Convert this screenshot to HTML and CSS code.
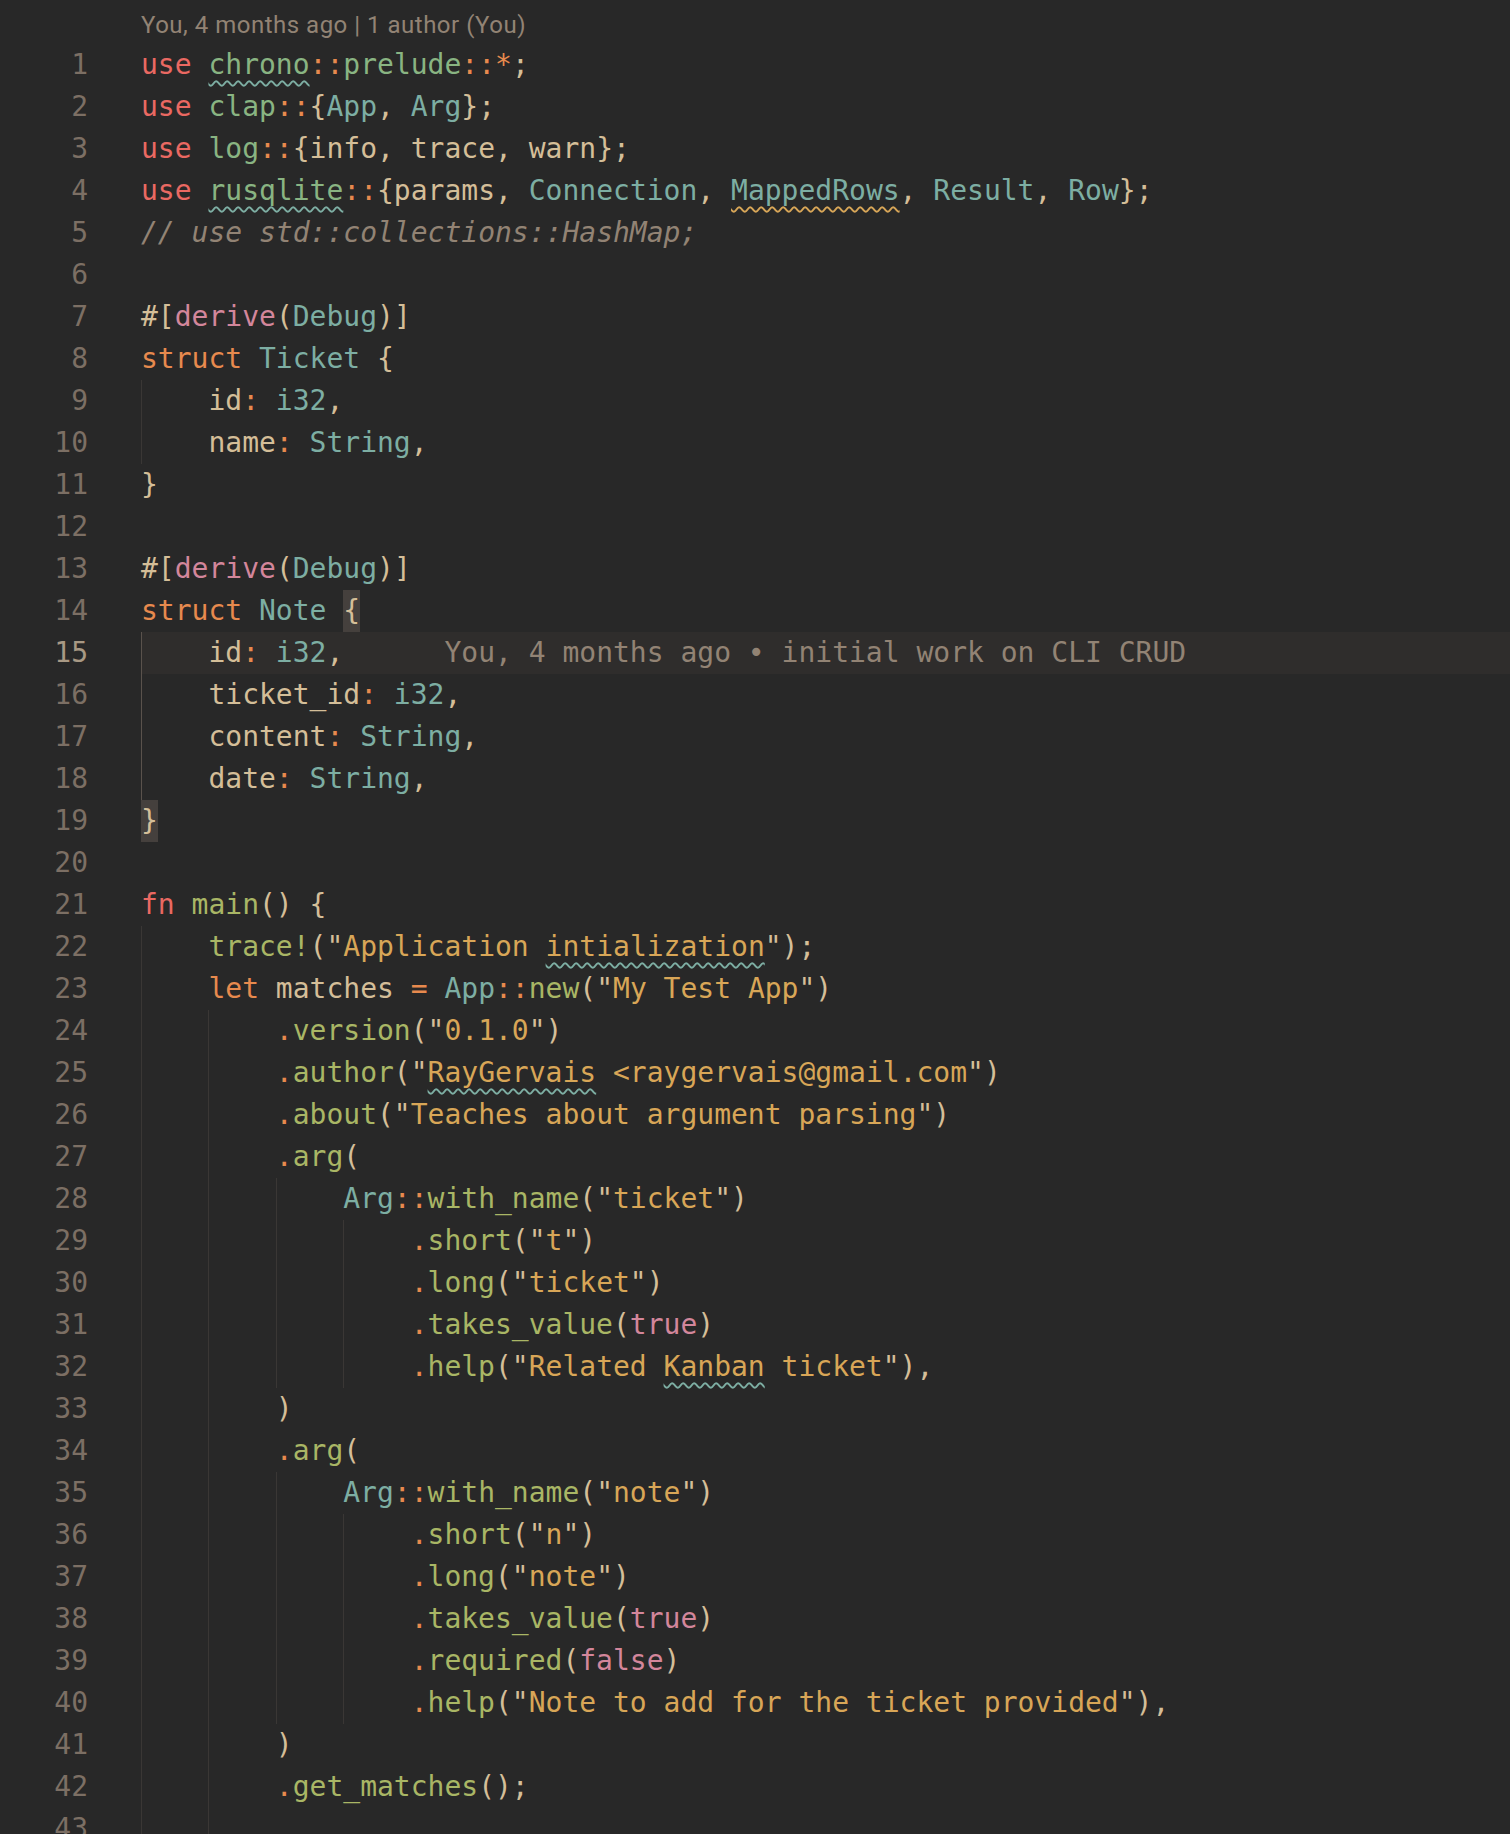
FILE: index.html
```html
<!DOCTYPE html>
<html lang="en">
<head>
    <meta charset="UTF-8">
    <title>main.rs</title>
    <link rel="stylesheet" href="styles.css">
</head>
<body>
    <div class="editor">
        <div class="codelens">You, 4 months ago | 1 author (You)</div>

        <div class="row"><span class="ln">1</span><span class="code"><span class="k">use</span> <span class="m spell">chrono</span><span class="o">::</span><span class="m">prelude</span><span class="o">::*</span>;</span></div>
        <div class="row"><span class="ln">2</span><span class="code"><span class="k">use</span> <span class="m">clap</span><span class="o">::</span>{<span class="t">App</span>, <span class="t">Arg</span>};</span></div>
        <div class="row"><span class="ln">3</span><span class="code"><span class="k">use</span> <span class="m">log</span><span class="o">::</span>{info, trace, warn};</span></div>
        <div class="row"><span class="ln">4</span><span class="code"><span class="k">use</span> <span class="m spell">rusqlite</span><span class="o">::</span>{params, <span class="t">Connection</span>, <span class="t warn">MappedRows</span>, <span class="t">Result</span>, <span class="t">Row</span>};</span></div>
        <div class="row"><span class="ln">5</span><span class="code"><span class="c">// use std::collections::HashMap;</span></span></div>
        <div class="row"><span class="ln">6</span><span class="code"></span></div>
        <div class="row"><span class="ln">7</span><span class="code">#[<span class="p">derive</span>(<span class="t">Debug</span>)]</span></div>
        <div class="row"><span class="ln">8</span><span class="code"><span class="o">struct</span> <span class="t">Ticket</span> {</span></div>
        <div class="row"><span class="ln">9</span><span class="code"><span class="ig"></span>id<span class="o">:</span> <span class="t">i32</span>,</span></div>
        <div class="row"><span class="ln">10</span><span class="code"><span class="ig"></span>name<span class="o">:</span> <span class="t">String</span>,</span></div>
        <div class="row"><span class="ln">11</span><span class="code">}</span></div>
        <div class="row"><span class="ln">12</span><span class="code"></span></div>
        <div class="row"><span class="ln">13</span><span class="code">#[<span class="p">derive</span>(<span class="t">Debug</span>)]</span></div>
        <div class="row"><span class="ln">14</span><span class="code"><span class="o">struct</span> <span class="t">Note</span> <span class="match">{</span></span></div>
        <div class="row current"><span class="ln">15</span><span class="code"><span class="ig active"></span>id<span class="o">:</span> <span class="t">i32</span>,<span class="blame">You, 4 months ago • initial work on CLI CRUD</span></span></div>
        <div class="row"><span class="ln">16</span><span class="code"><span class="ig active"></span>ticket_id<span class="o">:</span> <span class="t">i32</span>,</span></div>
        <div class="row"><span class="ln">17</span><span class="code"><span class="ig active"></span>content<span class="o">:</span> <span class="t">String</span>,</span></div>
        <div class="row"><span class="ln">18</span><span class="code"><span class="ig active"></span>date<span class="o">:</span> <span class="t">String</span>,</span></div>
        <div class="row"><span class="ln">19</span><span class="code"><span class="match">}</span></span></div>
        <div class="row"><span class="ln">20</span><span class="code"></span></div>
        <div class="row"><span class="ln">21</span><span class="code"><span class="k">fn</span> <span class="f">main</span>() {</span></div>
        <div class="row"><span class="ln">22</span><span class="code"><span class="ig"></span><span class="f">trace!</span>("<span class="s">Application <span class="spell">intialization</span></span>");</span></div>
        <div class="row"><span class="ln">23</span><span class="code"><span class="ig"></span><span class="o">let</span> matches <span class="o">=</span> <span class="t">App</span><span class="o">::</span><span class="f">new</span>("<span class="s">My Test App</span>")</span></div>
        <div class="row"><span class="ln">24</span><span class="code"><span class="ig"></span><span class="ig"></span><span class="o">.</span><span class="f">version</span>("<span class="s">0.1.0</span>")</span></div>
        <div class="row"><span class="ln">25</span><span class="code"><span class="ig"></span><span class="ig"></span><span class="o">.</span><span class="f">author</span>("<span class="s"><span class="spell">RayGervais</span> &lt;raygervais@gmail.com</span>")</span></div>
        <div class="row"><span class="ln">26</span><span class="code"><span class="ig"></span><span class="ig"></span><span class="o">.</span><span class="f">about</span>("<span class="s">Teaches about argument parsing</span>")</span></div>
        <div class="row"><span class="ln">27</span><span class="code"><span class="ig"></span><span class="ig"></span><span class="o">.</span><span class="f">arg</span>(</span></div>
        <div class="row"><span class="ln">28</span><span class="code"><span class="ig"></span><span class="ig"></span><span class="ig"></span><span class="t">Arg</span><span class="o">::</span><span class="f">with_name</span>("<span class="s">ticket</span>")</span></div>
        <div class="row"><span class="ln">29</span><span class="code"><span class="ig"></span><span class="ig"></span><span class="ig"></span><span class="ig"></span><span class="o">.</span><span class="f">short</span>("<span class="s">t</span>")</span></div>
        <div class="row"><span class="ln">30</span><span class="code"><span class="ig"></span><span class="ig"></span><span class="ig"></span><span class="ig"></span><span class="o">.</span><span class="f">long</span>("<span class="s">ticket</span>")</span></div>
        <div class="row"><span class="ln">31</span><span class="code"><span class="ig"></span><span class="ig"></span><span class="ig"></span><span class="ig"></span><span class="o">.</span><span class="f">takes_value</span>(<span class="p">true</span>)</span></div>
        <div class="row"><span class="ln">32</span><span class="code"><span class="ig"></span><span class="ig"></span><span class="ig"></span><span class="ig"></span><span class="o">.</span><span class="f">help</span>("<span class="s">Related <span class="spell">Kanban</span> ticket</span>"),</span></div>
        <div class="row"><span class="ln">33</span><span class="code"><span class="ig"></span><span class="ig"></span>)</span></div>
        <div class="row"><span class="ln">34</span><span class="code"><span class="ig"></span><span class="ig"></span><span class="o">.</span><span class="f">arg</span>(</span></div>
        <div class="row"><span class="ln">35</span><span class="code"><span class="ig"></span><span class="ig"></span><span class="ig"></span><span class="t">Arg</span><span class="o">::</span><span class="f">with_name</span>("<span class="s">note</span>")</span></div>
        <div class="row"><span class="ln">36</span><span class="code"><span class="ig"></span><span class="ig"></span><span class="ig"></span><span class="ig"></span><span class="o">.</span><span class="f">short</span>("<span class="s">n</span>")</span></div>
        <div class="row"><span class="ln">37</span><span class="code"><span class="ig"></span><span class="ig"></span><span class="ig"></span><span class="ig"></span><span class="o">.</span><span class="f">long</span>("<span class="s">note</span>")</span></div>
        <div class="row"><span class="ln">38</span><span class="code"><span class="ig"></span><span class="ig"></span><span class="ig"></span><span class="ig"></span><span class="o">.</span><span class="f">takes_value</span>(<span class="p">true</span>)</span></div>
        <div class="row"><span class="ln">39</span><span class="code"><span class="ig"></span><span class="ig"></span><span class="ig"></span><span class="ig"></span><span class="o">.</span><span class="f">required</span>(<span class="p">false</span>)</span></div>
        <div class="row"><span class="ln">40</span><span class="code"><span class="ig"></span><span class="ig"></span><span class="ig"></span><span class="ig"></span><span class="o">.</span><span class="f">help</span>("<span class="s">Note to add for the ticket provided</span>"),</span></div>
        <div class="row"><span class="ln">41</span><span class="code"><span class="ig"></span><span class="ig"></span>)</span></div>
        <div class="row"><span class="ln">42</span><span class="code"><span class="ig"></span><span class="ig"></span><span class="o">.</span><span class="f">get_matches</span>();</span></div>
        <div class="row"><span class="ln">43</span><span class="code"><span class="ig"></span><span class="ig"></span></span></div>
    </div>
</body>
</html>
```

FILE: styles.css
```css
* {
    margin: 0;
    padding: 0;
    box-sizing: border-box;
}

html, body {
    height: 100%;
    overflow: hidden;
}

body {
    background-color: #282828;
    color: #d4be98;
}

.editor {
    font-family: "DejaVu Sans Mono", monospace;
    font-size: 28px;
}

.codelens {
    height: 44px;
    padding-top: 7px;
    padding-left: 141px;
    line-height: 37px;
    font-family: Roboto, "Liberation Sans", sans-serif;
    font-size: 24px;
    letter-spacing: 0.5px;
    color: #928374;
}

.row {
    display: flex;
    height: 42px;
    line-height: 42px;
    white-space: pre;
}

.ln {
    width: 88px;
    flex-shrink: 0;
    text-align: right;
    color: #7c6f64;
}

.code {
    flex: 1;
    margin-left: 53px;
}

.current .code {
    background: #2f2d2c;
}

.current .ln {
    color: #a89984;
}

/* indent guides */
.ig {
    display: inline-block;
    width: 4ch;
    height: 42px;
    vertical-align: top;
    border-left: 1px solid #3a3735;
}

.ig.active {
    border-left-color: #5a524c;
}

.match {
    display: inline-block;
    height: 42px;
    vertical-align: top;
    background: #45403d;
}

.blame {
    margin-left: 6ch;
    color: #928374;
}

/* syntax */
.k { color: #ea6962; }
.o { color: #e78a4e; }
.m { color: #89b482; }
.t { color: #7daea3; }
.p { color: #d3869b; }
.f { color: #a9b665; }
.s { color: #d8a657; }
.c { color: #928374; font-style: italic; }

.spell,
.warn {
    text-decoration: underline wavy #7daea3;
    text-decoration-thickness: 1.5px;
    text-underline-offset: 6px;
}

.warn {
    text-decoration-color: #d8a657;
}
```
